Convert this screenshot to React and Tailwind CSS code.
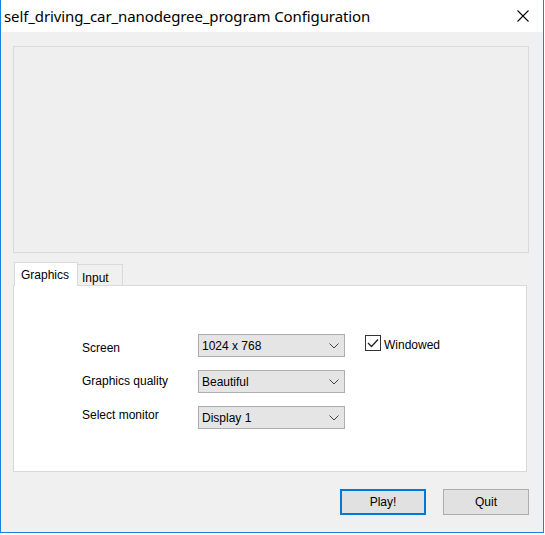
import React from "react";

function Select({ value }) {
  return (
    <div className="w-[147px] h-[23px] border border-[#adadad] bg-[#e5e5e5] flex items-center justify-between pl-[3px] pr-[5px]">
      <span>{value}</span>
      <svg width="10" height="6" viewBox="0 0 10 6" className="mt-[1px]">
        <path d="M0.5 0.5 L5 5 L9.5 0.5" fill="none" stroke="#444" strokeWidth="1" />
      </svg>
    </div>
  );
}

export default function App() {
  return (
    <div className="w-[545px] h-[535px] bg-white" style={{ fontFamily: "'Liberation Sans', Arial, sans-serif" }}>
      <div className="w-[544px] h-[533px] border border-[#1783e1] border-t-0 flex flex-col">
        <div className="h-[32px] bg-white flex items-center justify-between pl-[3px] pr-[14px] shrink-0">
          <span className="text-[15px] text-black tracking-[-0.1px]" style={{ fontFamily: "'Noto Sans', 'Open Sans', sans-serif" }}>
            self_driving_car_nanodegree_program Configuration
          </span>
          <svg width="12" height="12" viewBox="0 0 12 12">
            <path d="M0.5 0.5 L11.5 11.5 M11.5 0.5 L0.5 11.5" stroke="#000" strokeWidth="1.1" />
          </svg>
        </div>
        <div className="flex-1 bg-[#f0f0f0] flex flex-col px-[12px] text-[12px] text-black">
          <div className="mt-[14px] h-[207px] border border-[#dadada] bg-[#efefef] w-[516px]"></div>
          <div className="mt-[8px] flex items-end h-[24px] relative">
            <div className="h-[24px] w-[64px] bg-white border border-[#d9d9d9] border-b-0 relative z-10 flex items-start pt-[3px] pl-[6px] -mb-[1px] ml-[1px]">
              Graphics
            </div>
            <div className="h-[21px] w-[45px] bg-[#f0f0f0] border border-[#d9d9d9] border-b-0 border-l-0 flex items-start pt-[4px] pl-[4px]">
              Input
            </div>
          </div>
          <div className="w-[514px] h-[187px] bg-white border border-[#d9d9d9] pl-[68px] pt-[48px]">
            <div className="grid grid-cols-[116px_147px_auto] gap-y-[13px] items-center">
              <span className="mt-[4px]">Screen</span>
              <Select value="1024 x 768" />
              <div className="flex items-center ml-[20px] -mt-[5px]">
                <div className="w-[16px] h-[16px] border border-[#333] bg-white flex items-center justify-center">
                  <svg width="12" height="10" viewBox="0 0 12 10">
                    <path d="M1 5 L4.5 8.5 L11 1.5" fill="none" stroke="#222" strokeWidth="1.3" />
                  </svg>
                </div>
                <span className="ml-[3px] mt-[4px]">Windowed</span>
              </div>
              <span className="-mt-[2px]">Graphics quality</span>
              <Select value="Beautiful" />
              <span></span>
              <span className="-mt-[5px]">Select monitor</span>
              <Select value="Display 1" />
              <span></span>
            </div>
          </div>
          <div className="flex justify-end mt-[17px] gap-[17px] pr-[2px]">
            <button className="w-[86px] h-[26px] border-2 border-[#0078d7] bg-[#e1e1e1] text-[12px]">Play!</button>
            <button className="w-[86px] h-[26px] border border-[#adadad] bg-[#e1e1e1] text-[12px]">Quit</button>
          </div>
        </div>
      </div>
    </div>
  );
}
